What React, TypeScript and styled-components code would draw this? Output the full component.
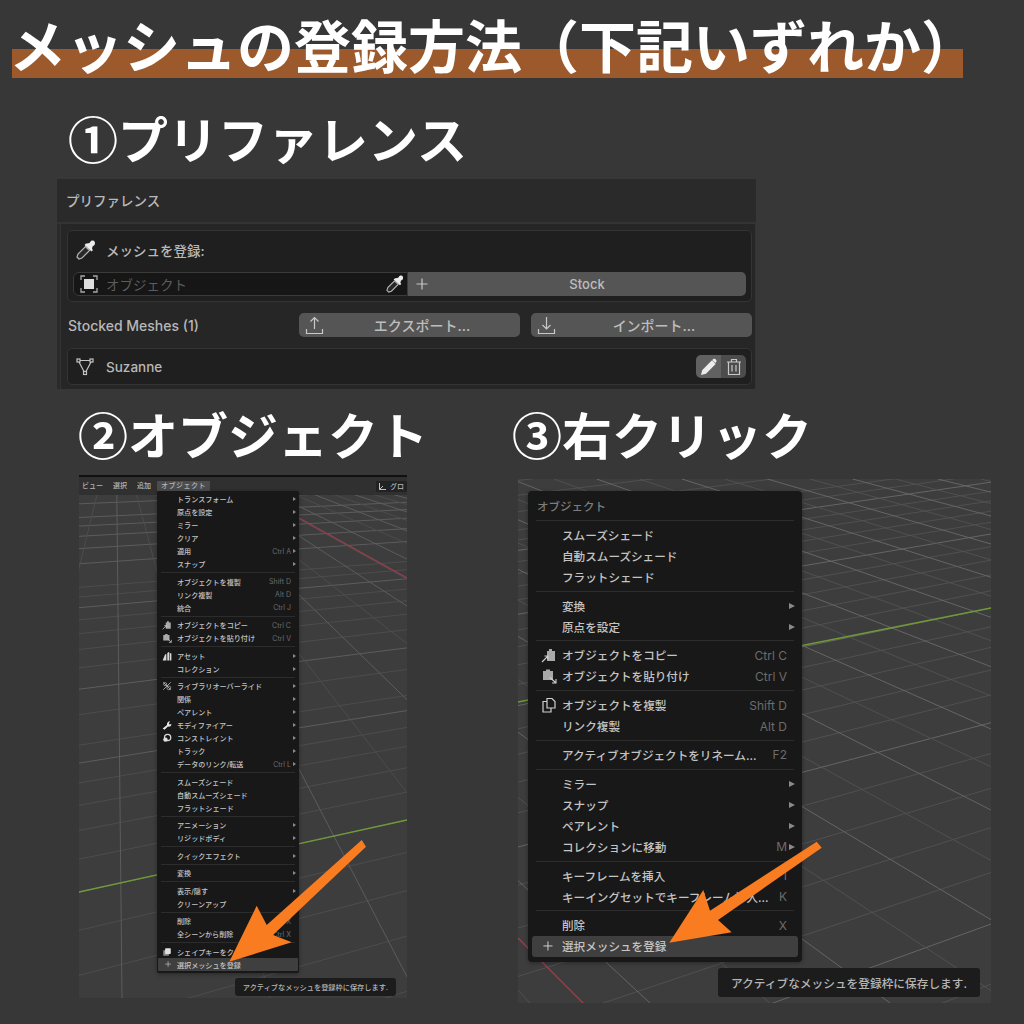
import React from 'react';
import styled, { createGlobalStyle } from 'styled-components';

const uiFont = `Inter, "Noto Sans CJK JP", sans-serif`;

const GlobalStyle = createGlobalStyle`
  html, body { margin: 0; padding: 0; background: #373737; }
  * { box-sizing: border-box; }
`;

const Page = styled.div`
  width: 1024px;
  height: 1024px;
  overflow: hidden;
  background: #373737;
  font-family: ${uiFont};
`;

const Title = styled.h1`
  margin: 0 0 0 12px;
  width: 951px;
  height: 96px;
  font: 700 57px/86px "Noto Sans CJK JP", sans-serif;
  text-indent: -3px;
  color: #fff;
  white-space: nowrap;
  background: linear-gradient(transparent 49px, #9c592b 49px, #9c592b 78px, transparent 78px);
`;

const Heading = styled.h2<{ $top: number; $left: number; $bottom: number }>`
  margin: ${(p) => p.$top}px 0 ${(p) => p.$bottom}px ${(p) => p.$left}px;
  font: 700 50px/49px "Noto Sans CJK JP", sans-serif;
  color: #fff;
  white-space: nowrap;
`;

const Panel = styled.section`
  margin-left: 57px;
  width: 699px;
  height: 210px;
  background: #2a2a2a;
  color: #b8b8b8;
`;

const PanelHeader = styled.div`
  height: 45px;
  padding: 0 0 2px 9px;
  display: flex;
  align-items: center;
  font-size: 13.5px;
  font-weight: 500;
  border-bottom: 2px solid #333;
`;

const PanelBody = styled.div`
  margin-left: 3px;
  height: 165px;
  padding: 6px 3px 0 6px;
  background: #262626;
  border-left: 1px solid #343434;
  border-right: 1px solid #343434;
`;

const Box = styled.div`
  background: #1f1f1f;
  border: 1px solid #343434;
  border-radius: 5px;
  padding: 0 5px;
`;

const BoxTitle = styled.div`
  height: 38px;
  margin-bottom: 3px;
  padding-left: 3px;
  display: flex;
  align-items: center;
  gap: 10px;
  font-size: 13.5px;
  font-weight: 500;
`;

const FieldRow = styled.div`
  display: flex;
  height: 24px;
  margin-bottom: 5px;
`;

const Field = styled.div`
  width: 335px;
  padding: 0 3px 0 6px;
  display: flex;
  align-items: center;
  gap: 8px;
  background: #161616;
  border: 1px solid #3a3a3a;
  border-radius: 6px 0 0 6px;
  font-size: 13.5px;
  color: #5c5c5c;
`;

const FieldText = styled.span`
  flex: 1;
`;

const Button = styled.div<{ $side?: 'left' | 'full' }>`
  display: flex;
  align-items: center;
  height: 24px;
  padding-left: 6px;
  background: #555;
  border-radius: ${(p) => (p.$side === 'left' ? '0 5px 5px 0' : '5px')};
  color: #bdbdbd;
  font-size: 14px;
  font-weight: 500;
`;

const StockButton = styled(Button)`
  flex: 1;
  padding-left: 8px;
  font-size: 13px;
`;

const ButtonLabel = styled.span`
  flex: 1;
  text-align: center;
`;

const ActionRow = styled.div`
  display: flex;
  align-items: center;
  gap: 11px;
  margin: 11px 0;
`;

const ActionLabel = styled.div`
  width: 221px;
  padding-left: 1px;
  font-size: 14px;
  font-weight: 500;
`;

const ActionButton = styled(Button)`
  width: 221px;
`;

const MeshBox = styled(Box)`
  height: 37px;
  padding: 0 5px 0 8px;
  display: flex;
  align-items: center;
  gap: 12px;
  font-size: 13.5px;
  font-weight: 500;
`;

const MeshName = styled.span`
  flex: 1;
`;

const MiniGroup = styled.div`
  display: flex;
`;

const MiniButton = styled.div<{ $active?: boolean }>`
  height: 23px;
  width: 25px;
  display: flex;
  align-items: center;
  justify-content: center;
  background: ${(p) => (p.$active ? '#616161' : '#4c4c4c')};
  border-radius: ${(p) => (p.$active ? '5px 0 0 5px' : '0 5px 5px 0')};
`;

const Columns = styled.div`
  display: grid;
  grid-template-columns: 512px 1fr;
`;

const LeftColumn = styled.div`
  padding-left: 79px;
`;

const RightColumn = styled.div``;

const Viewport = styled.div<{ $w: number; $h: number; $left?: number }>`
  position: relative;
  width: ${(p) => p.$w}px;
  height: ${(p) => p.$h}px;
  margin-left: ${(p) => p.$left ?? 0}px;
  background: #3d3d3d;
  overflow: hidden;
`;

const Drawing = styled.svg`
  position: absolute;
  inset: 0;
  width: 100%;
  height: 100%;
`;

const TopBar = styled.div`
  position: absolute;
  inset: 0 0 auto 0;
  height: 20px;
  padding-left: 3px;
  display: flex;
  align-items: center;
  background: #303030;
  border-top: 2px solid #111;
  color: #b5b5b5;
  font-size: 7px;
  font-weight: 500;
`;

const TopItem = styled.span<{ $active?: boolean }>`
  padding: 0 ${(p) => (p.$active ? 4 : 0)}px;
  margin-right: ${(p) => (p.$active ? 0 : 10)}px;
  line-height: 10px;
  background: ${(p) => (p.$active ? '#4c4c4c' : 'transparent')};
  border-radius: 1px;
  ${(p) => p.$active && 'margin-left: -4px; letter-spacing: .5px;'}
`;

const TopRight = styled.span`
  margin-left: auto;
  height: 11px;
  width: 31px;
  padding-left: 2px;
  display: flex;
  align-items: center;
  gap: 3px;
  background: #222;
  border-radius: 1px;
  white-space: nowrap;
  overflow: hidden;
`;

const Menu = styled.div<{ $compact?: boolean; $x: number; $y: number; $w: number }>`
  position: absolute;
  left: ${(p) => p.$x}px;
  top: ${(p) => p.$y}px;
  width: ${(p) => p.$w}px;
  padding: ${(p) => (p.$compact ? '1.500px 1px 1.500px' : '0 4px 4.900px')};
  background: #181818;
  border-radius: ${(p) => (p.$compact ? 2 : 4)}px;
  box-shadow: 0 1px 4px rgba(0, 0, 0, 0.35);
  color: #c4c4c4;
  font-size: ${(p) => (p.$compact ? 7.1 : 11.6)}px;
  font-weight: 500;
`;

const MenuTitle = styled.div`
  height: 25.500px;
  padding: 4px 0 0 5px;
  display: flex;
  align-items: center;
  color: #7c7c7c;
  font-size: 11.500px;
`;

const Separator = styled.div<{ $compact?: boolean }>`
  height: ${(p) => (p.$compact ? 4.5 : 7.6)}px;
  display: flex;
  align-items: center;
  padding: 0 ${(p) => (p.$compact ? 3 : 4)}px;

  &::before {
    content: '';
    flex: 1;
    height: 1px;
    background: #2c2c2c;
  }
`;

const MenuRow = styled.div<{ $compact?: boolean; $active?: boolean }>`
  height: ${(p) => (p.$compact ? 13 : 21.1)}px;
  display: flex;
  align-items: center;
  white-space: nowrap;
  border-radius: ${(p) => (p.$compact ? 1 : 3)}px;
  background: ${(p) => (p.$active ? '#3f3f3f' : 'transparent')};
  padding-right: ${(p) => (p.$compact ? 2 : 3)}px;
`;

const IconSlot = styled.span<{ $compact?: boolean }>`
  flex: none;
  width: ${(p) => (p.$compact ? 19 : 30)}px;
  display: flex;
  align-items: center;
  justify-content: ${(p) => (p.$compact ? 'center' : 'flex-end')};
  padding-right: ${(p) => (p.$compact ? 2 : 5)}px;
`;

const PlusMark = styled.span<{ $compact?: boolean }>`
  display: flex;
  margin: ${(p) => (p.$compact ? '0 0 0 3px' : '0 4px 0 0')};
`;

const RowLabel = styled.span`
  flex: 1;
`;

const Shortcut = styled.span<{ $compact?: boolean }>`
  color: #6c6c6c;
  font-size: ${(p) => (p.$compact ? 7 : 12)}px;
  font-weight: 400;
  margin-right: 1px;
`;

const SubArrow = styled.i<{ $compact?: boolean }>`
  flex: none;
  width: 0;
  height: 0;
  margin-left: 1px;
  border-style: solid;
  border-color: transparent transparent transparent #8a8a8a;
  border-width: ${(p) => (p.$compact ? '2px 0 2px 3px' : '3.5px 0 3.5px 6px')};
`;

const ArrowGap = styled.span<{ $compact?: boolean }>`
  flex: none;
  width: ${(p) => (p.$compact ? 4 : 7)}px;
`;

const Tooltip = styled.div<{ $compact?: boolean; $right: number; $bottom: number }>`
  position: absolute;
  right: ${(p) => p.$right}px;
  bottom: ${(p) => p.$bottom}px;
  padding: ${(p) => (p.$compact ? '0 8px' : '0 13px')};
  height: ${(p) => (p.$compact ? 18 : 29)}px;
  display: flex;
  align-items: center;
  white-space: nowrap;
  background: #1c1c1c;
  border-radius: 3px;
  color: #b5b5b5;
  font-size: ${(p) => (p.$compact ? 7.2 : 11.7)}px;
  font-weight: 500;
`;

/* ---------- icons ---------- */

const Pipette = ({ size = 20 }: { size?: number }) => (
  <svg width={size} height={size} viewBox="0 0 20 20">
    <path d="M11 3.500 13.500 3 15 1c1.500-.8 3-.5 3.500.5s.8 2.300 0 3.500l-2 1.500-.5 2.500 1 1-1.500 1.500L8.500 5l1.500-1.500z" fill="#ececec" />
    <path d="M9.500 6.500 13.500 10.500 6 18 3 19 1 17l1-3z" fill="#2a2a2a" stroke="#b5b5b5" strokeWidth="1.200" />
  </svg>
);

const ObjectIcon = () => (
  <svg width="18" height="18" viewBox="0 0 18 18" fill="none">
    <rect x="4" y="4" width="10" height="10" fill="#dedede" />
    <path d="M1 5V1h4M13 1h4v4M17 13v4h-4M5 17H1v-4" stroke="#a8a8a8" strokeWidth="1.300" />
  </svg>
);

const Plus = ({ size = 12, color = '#c8c8c8' }: { size?: number; color?: string }) => (
  <svg width={size} height={size} viewBox="0 0 12 12">
    <path d="M6 .5v11M.5 6h11" stroke={color} strokeWidth="1.200" />
  </svg>
);

const UploadIcon = () => (
  <svg width="19" height="19" viewBox="0 0 19 19" fill="none" stroke="#c8c8c8" strokeWidth="1.200">
    <path d="M9.500 13V1.500M5.500 5.500l4-4 4 4M1.500 13v4.500h16V13" />
  </svg>
);

const DownloadIcon = () => (
  <svg width="19" height="19" viewBox="0 0 19 19" fill="none" stroke="#c8c8c8" strokeWidth="1.200">
    <path d="M9.500 1v12M5.500 9l4 4 4-4M1.500 13v4.500h16V13" />
  </svg>
);

const MeshIcon = () => (
  <svg width="18" height="18" viewBox="0 0 18 18" fill="none" stroke="#c4c4c4" strokeWidth="1.200">
    <path d="M4 2.500h10M3 4l5 9.500M15 4l-5 9.500" />
    <rect x="1" y="1" width="3" height="3" />
    <rect x="14" y="1" width="3" height="3" />
    <rect x="7.500" y="13.500" width="3" height="3" />
  </svg>
);

const PencilIcon = () => (
  <svg width="18" height="18" viewBox="0 0 18 18">
    <path d="M1 17l1.300-5L12 2.300l3.700 3.700L6 15.700z" fill="#ececec" />
    <path d="M13 1.300c1-.8 2-.6 2.800.2s1 1.800.2 2.800l-.8.800L12.300 2z" fill="#ececec" />
  </svg>
);

const TrashIcon = () => (
  <svg width="16" height="18" viewBox="0 0 16 18" fill="none" stroke="#c8c8c8" strokeWidth="1.200">
    <path d="M1 4h14M5.500 4V1.500h5V4M2.500 4v12.500h11V4M6 7v6.500M10 7v6.500" />
  </svg>
);

type IconName = 'copy' | 'paste' | 'duplicate' | 'asset' | 'override' | 'wrench' | 'constraint' | 'shape' | 'plus';

const MenuIcon = ({ name, size, compact }: { name: IconName; size: number; compact?: boolean }) => {
  if (name === 'plus') {
    return (
      <PlusMark $compact={compact}>
        <Plus size={size * 0.62} color="#cfcfcf" />
      </PlusMark>
    );
  }
  return (
    <svg width={size} height={size} viewBox="0 0 16 16" fill="none">
      {name === 'copy' && (
        <>
          <path d="M6 4h2V2h3v2h3v10H6z" fill="#a9a9a9" />
          <path d="M1 15l6-6M3.500 9H7v3.500" stroke="#d0d0d0" strokeWidth="1.100" />
        </>
      )}
      {name === 'paste' && (
        <>
          <path d="M2 3h3V1.500h4V3h3v9H2z" fill="#a9a9a9" />
          <path d="M9 9.500l5.500 5M15 11v4h-4" stroke="#d0d0d0" strokeWidth="1.100" />
        </>
      )}
      {name === 'duplicate' && (
        <>
          <path d="M6 1.500h5l3 3V11H6z" stroke="#d0d0d0" strokeWidth="1.200" />
          <path d="M6 4.500H2V15h8v-4" stroke="#d0d0d0" strokeWidth="1.200" />
        </>
      )}
      {name === 'asset' && <path d="M1 15 5 5h2v10zM8.500 15V3l3-2v14zM12.500 15V3l2.500 1v11z" fill="#d8d8d8" />}
      {name === 'override' && (
        <>
          <path d="M2 2l12 12M14 2 2 14" stroke="#b0b0b0" strokeWidth="1.400" />
          <circle cx="11" cy="11" r="3" stroke="#c8c8c8" />
          <circle cx="5" cy="5" r="2.500" stroke="#c8c8c8" />
        </>
      )}
      {name === 'wrench' && (
        <path d="M1 13.500 8 8c-.6-3 1.500-6 5-6l-2 3 1 2 3-.8c.3 3-2.500 5.200-5.500 4.300L4 15.500z" fill="#e8e8e8" />
      )}
      {name === 'constraint' && (
        <>
          <circle cx="9" cy="7" r="5" stroke="#d8d8d8" strokeWidth="2" />
          <circle cx="5.500" cy="10.500" r="3.500" fill="#e0e0e0" />
        </>
      )}
      {name === 'shape' && (
        <>
          <rect x="2" y="5" width="9" height="9" rx="1" fill="#8c8c8c" />
          <rect x="5" y="2" width="9" height="9" rx="1" fill="#e0e0e0" />
        </>
      )}
    </svg>
  );
};

/* ---------- viewport grid drawing ---------- */

type Scene = {
  box: [number, number, number, number];
  horizon: number;
  vpA: number;
  vpB: number;
  green: [number, number, number, number];
  red: [number, number, number, number];
  du: number;
  dx: number;
  bottomX: number;
  major: string;
  minor: string;
};

const sceneTwo: Scene = {
  box: [79, 475, 328, 523],
  horizon: 417,
  vpA: 2240,
  vpB: 116,
  green: [79, 892, 407, 820],
  red: [290, 513, 407, 578],
  du: 0.000185,
  dx: 148,
  bottomX: 122,
  major: '#606060',
  minor: '#4e4e4e',
};

const sceneThree: Scene = {
  box: [518, 479, 473, 524],
  horizon: 190,
  vpA: 3017,
  vpB: -227,
  green: [518, 702, 991, 608],
  red: [518, 938, 590, 1010],
  du: 0.000103,
  dx: 120,
  bottomX: 170,
  major: '#6a6a6a',
  minor: '#525252',
};

const gridLines = (s: Scene) => {
  const [x, y, w, h] = s.box;
  const right = x + w;
  const bottom = y + h;
  const out: { d: string; major: boolean }[] = [];

  // lines that run toward the right vanishing point
  const u0 = 1 / (s.green[3] - s.horizon);
  for (let i = -60; i < 200; i++) {
    const u = u0 + i * s.du;
    if (u <= 0) continue;
    const yr = s.horizon + 1 / u;
    if (yr < y - 100 || yr > bottom + 300) continue;
    const depth = yr - s.horizon;
    const step = depth > 280 ? 1 : depth > 140 ? 2 : depth > 80 ? 5 : 10;
    if (i % step !== 0) continue;
    const slope = (s.horizon - yr) / (s.vpA - right);
    out.push({ d: `M${x} ${yr + slope * (x - right)}L${right} ${yr}`, major: i % 5 === 0 });
  }

  // lines that fan out from the left vanishing point
  for (let i = -30; i < 60; i++) {
    const xb = s.bottomX + i * s.dx;
    const t = (y - s.horizon) / (bottom - s.horizon);
    const xt = s.vpB + (xb - s.vpB) * t;
    out.push({ d: `M${xt} ${y}L${xb} ${bottom}`, major: i % 2 === 0 });
  }
  return out;
};

const GridDrawing = ({ scene }: { scene: Scene }) => (
  <Drawing viewBox={scene.box.join(' ')}>
    {gridLines(scene).map((l, i) => (
      <path key={i} d={l.d} stroke={l.major ? scene.major : scene.minor} strokeWidth="0.9" />
    ))}
    <line x1={scene.green[0]} y1={scene.green[1]} x2={scene.green[2]} y2={scene.green[3]} stroke="#6f9a37" strokeWidth="1.300" />
    <line x1={scene.red[0]} y1={scene.red[1]} x2={scene.red[2]} y2={scene.red[3]} stroke="#96404e" strokeWidth="1.300" />
  </Drawing>
);

/* ---------- menus ---------- */

type Item = { label: string; key?: string; arrow?: boolean; icon?: IconName; active?: boolean };

const fullMenu: Item[][] = [
  [
    { label: 'トランスフォーム', arrow: true },
    { label: '原点を設定', arrow: true },
    { label: 'ミラー', arrow: true },
    { label: 'クリア', arrow: true },
    { label: '適用', key: 'Ctrl A', arrow: true },
    { label: 'スナップ', arrow: true },
  ],
  [
    { label: 'オブジェクトを複製', key: 'Shift D' },
    { label: 'リンク複製', key: 'Alt D' },
    { label: '統合', key: 'Ctrl J' },
  ],
  [
    { label: 'オブジェクトをコピー', key: 'Ctrl C', icon: 'copy' },
    { label: 'オブジェクトを貼り付け', key: 'Ctrl V', icon: 'paste' },
  ],
  [
    { label: 'アセット', arrow: true, icon: 'asset' },
    { label: 'コレクション', arrow: true },
  ],
  [
    { label: 'ライブラリオーバーライド', arrow: true, icon: 'override' },
    { label: '関係', arrow: true },
    { label: 'ペアレント', arrow: true },
    { label: 'モディファイアー', arrow: true, icon: 'wrench' },
    { label: 'コンストレイント', arrow: true, icon: 'constraint' },
    { label: 'トラック', arrow: true },
    { label: 'データのリンク/転送', key: 'Ctrl L', arrow: true },
  ],
  [{ label: 'スムーズシェード' }, { label: '自動スムーズシェード' }, { label: 'フラットシェード' }],
  [
    { label: 'アニメーション', arrow: true },
    { label: 'リジッドボディ', arrow: true },
  ],
  [{ label: 'クイックエフェクト', arrow: true }],
  [{ label: '変換', arrow: true }],
  [
    { label: '表示/隠す', arrow: true },
    { label: 'クリーンアップ', arrow: true },
  ],
  [
    { label: '削除', key: 'X' },
    { label: '全シーンから削除', key: 'Ctrl X' },
  ],
  [
    { label: 'シェイプキーをクリア', icon: 'shape' },
    { label: '選択メッシュを登録', icon: 'plus', active: true },
  ],
];

const contextMenu: Item[][] = [
  [{ label: 'スムーズシェード' }, { label: '自動スムーズシェード' }, { label: 'フラットシェード' }],
  [
    { label: '変換', arrow: true },
    { label: '原点を設定', arrow: true },
  ],
  [
    { label: 'オブジェクトをコピー', key: 'Ctrl C', icon: 'copy' },
    { label: 'オブジェクトを貼り付け', key: 'Ctrl V', icon: 'paste' },
  ],
  [
    { label: 'オブジェクトを複製', key: 'Shift D', icon: 'duplicate' },
    { label: 'リンク複製', key: 'Alt D' },
  ],
  [{ label: 'アクティブオブジェクトをリネーム...', key: 'F2' }],
  [
    { label: 'ミラー', arrow: true },
    { label: 'スナップ', arrow: true },
    { label: 'ペアレント', arrow: true },
    { label: 'コレクションに移動', key: 'M', arrow: true },
  ],
  [
    { label: 'キーフレームを挿入', key: 'I' },
    { label: 'キーイングセットでキーフレーム挿入...', key: 'K' },
  ],
  [
    { label: '削除', key: 'X' },
    { label: '選択メッシュを登録', icon: 'plus', active: true },
  ],
];

const MenuGroups = ({ groups, compact }: { groups: Item[][]; compact?: boolean }) => (
  <>
    {groups.map((group, g) => (
      <React.Fragment key={g}>
        {g > 0 && <Separator $compact={compact} />}
        {group.map((item) => (
          <MenuRow key={item.label} $compact={compact} $active={item.active}>
            <IconSlot $compact={compact}>
              {item.icon && <MenuIcon name={item.icon} size={compact ? 10 : 16} compact={compact} />}
            </IconSlot>
            <RowLabel>{item.label}</RowLabel>
            {item.key && <Shortcut $compact={compact}>{item.key}</Shortcut>}
            {item.arrow ? <SubArrow $compact={compact} /> : <ArrowGap $compact={compact} />}
          </MenuRow>
        ))}
      </React.Fragment>
    ))}
  </>
);

const OrangeArrow = ({ box, points }: { box: number[]; points: string }) => (
  <Drawing viewBox={box.join(' ')}>
    <polygon points={points} fill="#f97c20" />
  </Drawing>
);

export default function App() {
  return (
    <Page>
      <GlobalStyle />
      <Title>メッシュの登録方法（下記いずれか）</Title>

      <Heading $top={17} $left={68} $bottom={17}>①プリファレンス</Heading>
      <Panel>
        <PanelHeader>プリファレンス</PanelHeader>
        <PanelBody>
          <Box>
            <BoxTitle>
              <Pipette />
              メッシュを登録:
            </BoxTitle>
            <FieldRow>
              <Field>
                <ObjectIcon />
                <FieldText>オブジェクト</FieldText>
                <Pipette size={18} />
              </Field>
              <StockButton $side="left">
                <Plus />
                <ButtonLabel>Stock</ButtonLabel>
              </StockButton>
            </FieldRow>
          </Box>
          <ActionRow>
            <ActionLabel>Stocked Meshes (1)</ActionLabel>
            <ActionButton>
              <UploadIcon />
              <ButtonLabel>エクスポート...</ButtonLabel>
            </ActionButton>
            <ActionButton>
              <DownloadIcon />
              <ButtonLabel>インポート...</ButtonLabel>
            </ActionButton>
          </ActionRow>
          <MeshBox>
            <MeshIcon />
            <MeshName>Suzanne</MeshName>
            <MiniGroup>
              <MiniButton $active>
                <PencilIcon />
              </MiniButton>
              <MiniButton>
                <TrashIcon />
              </MiniButton>
            </MiniGroup>
          </MeshBox>
        </PanelBody>
      </Panel>

      <Columns>
        <LeftColumn>
          <Heading $top={20} $left={-1} $bottom={17}>②オブジェクト</Heading>
          <Viewport $w={328} $h={523}>
            <GridDrawing scene={sceneTwo} />
            <TopBar>
              <TopItem>ビュー</TopItem>
              <TopItem>選択</TopItem>
              <TopItem>追加</TopItem>
              <TopItem $active>オブジェクト</TopItem>
              <TopRight>
                <svg width="9" height="9" viewBox="0 0 9 9" fill="none" stroke="#c0c0c0">
                  <path d="M1.500 1v6.500H8M1.500 7.500 5 4" />
                </svg>
                グロ
              </TopRight>
            </TopBar>
            <Menu $compact $x={78} $y={16} $w={142}>
              <MenuGroups groups={fullMenu} compact />
            </Menu>
            <Tooltip $compact $right={11} $bottom={2}>アクティブなメッシュを登録枠に保存します.</Tooltip>
            <OrangeArrow
              box={sceneTwo.box}
              points="361.700,840 366,846.700 273,935 291.700,942.300 229.300,961.700 256.700,905.700 266.700,925"
            />
          </Viewport>
        </LeftColumn>
        <RightColumn>
          <Heading $top={20} $left={0} $bottom={21}>③右クリック</Heading>
          <Viewport $w={473} $h={524} $left={6}>
            <GridDrawing scene={sceneThree} />
            <Menu $x={10} $y={12} $w={274}>
              <MenuTitle>オブジェクト</MenuTitle>
              <Separator />
              <MenuGroups groups={contextMenu} />
            </Menu>
            <Tooltip $right={11} $bottom={6}>アクティブなメッシュを登録枠に保存します.</Tooltip>
            <OrangeArrow
              box={sceneThree.box}
              points="816.700,841.700 821.700,847.700 718,920 731.700,932.300 669.300,942.700 703.300,890 710,910.700"
            />
          </Viewport>
        </RightColumn>
      </Columns>
    </Page>
  );
}
